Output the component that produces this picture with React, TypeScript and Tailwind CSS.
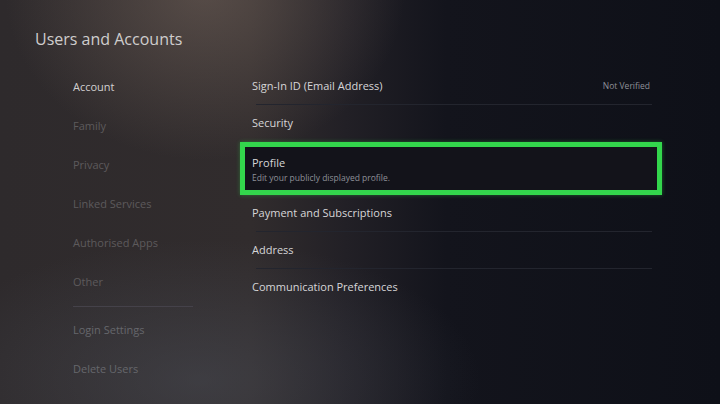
const navItems = [
  { label: 'Account', active: true },
  { label: 'Family' },
  { label: 'Privacy' },
  { label: 'Linked Services' },
  { label: 'Authorised Apps' },
  { label: 'Other' },
];

const navFooter = ['Login Settings', 'Delete Users'];

function Row({ label, right, line = true }: { label: string; right?: string; line?: boolean }) {
  return (
    <div className="relative flex h-[37px] items-center justify-between px-3">
      <span className="text-[11px] text-[#d6d6d8]">{label}</span>
      {right && <span className="text-[8.5px] text-[#8e9098]">{right}</span>}
      {line && <div className="absolute bottom-0 left-4 right-2.5 h-px bg-[#23252e]" />}
    </div>
  );
}

export default function App() {
  return (
    <div
      className="h-[404px] w-[720px] overflow-hidden bg-[radial-gradient(ellipse_200px_170px_at_205px_-10px,rgba(125,108,98,0.5),transparent),radial-gradient(ellipse_280px_140px_at_200px_380px,rgba(78,82,92,0.45),transparent),linear-gradient(90deg,#2e2a2c_0%,#312c2d_35%,#222026_48%,#13141c_62%,#0e1018_100%)] text-white"
      style={{ fontFamily: '"Open Sans", "Liberation Sans", sans-serif' }}
    >
      <h1 className="pl-[35px] pt-[27px] text-[16px] font-normal leading-[24px] text-[#cfcdcd]">Users and Accounts</h1>

      <div className="mt-[17px] flex">
        <nav className="w-[240px] shrink-0 pl-[73px]">
          {navItems.map((item) => (
            <div key={item.label} className="flex h-[39px] items-center">
              <span className={`text-[11px] ${item.active ? 'text-[#d2d0d0]' : 'text-[#5d5a5c]'}`}>{item.label}</span>
            </div>
          ))}
          <div className="flex h-[9px] items-center">
            <div className="h-px w-[120px] bg-[#45424a]" />
          </div>
          {navFooter.map((label) => (
            <div key={label} className="flex h-[39px] items-center">
              <span className="text-[11px] text-[#66676c]">{label}</span>
            </div>
          ))}
        </nav>

        <div className="w-[422px]">
          <Row label="Sign-In ID (Email Address)" right="Not Verified" />
          <Row label="Security" line={false} />
          <div className="flex h-[53px] flex-col justify-center border-[5px] border-[#33d64c] bg-[#13131a] px-[7px] shadow-[0_0_4px_rgba(51,214,76,0.4)]">
            <span className="text-[11px] leading-[17px] text-[#d6d6d8]">Profile</span>
            <span className="text-[8.5px] leading-[13px] text-[#8e9098]">Edit your publicly displayed profile.</span>
          </div>
          <Row label="Payment and Subscriptions" />
          <Row label="Address" />
          <Row label="Communication Preferences" line={false} />
        </div>
      </div>
    </div>
  );
}
